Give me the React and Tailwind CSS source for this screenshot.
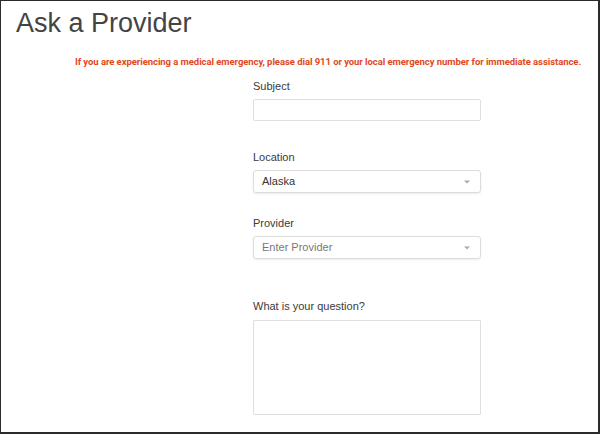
import React, { useState } from "react";

function Caret() {
  return (
    <span className="absolute right-[10px] top-1/2 -translate-y-1/2 w-0 h-0 border-l-[3px] border-r-[3px] border-t-[3px] border-l-transparent border-r-transparent border-t-[#aaa]" />
  );
}

export default function App() {
  const [subject, setSubject] = useState("");
  const [question, setQuestion] = useState("");

  return (
    <div className="w-[600px] h-[434px] bg-white border-l border-t border-r-2 border-b-2 border-[#2b2b2b] overflow-hidden font-['Liberation_Sans',Arial,sans-serif] text-[#333]">
      <h1 className="pl-[15px] pt-[5px] text-[27px] leading-[34px] text-[#444]">Ask a Provider</h1>
      {/* warning */}
      <p className="mt-[15px] pl-[74px] whitespace-nowrap text-[9.5px] tracking-[-0.06px] leading-[14px] font-bold text-[#e2481c] font-['Roboto',Arial,sans-serif]">
        If you are experiencing a medical emergency, please dial 911 or your local emergency number for immediate assistance.
      </p>
      <div className="ml-[252px] w-[228px] flex flex-col">
        <label className="mt-[11px] text-[11px] leading-[13px] text-[#3a3a3a]">Subject</label>
        <input
          value={subject}
          onChange={(e) => setSubject(e.target.value)}
          className="mt-[6px] h-[22px] border border-[#dcdfe3] rounded-[2px] px-2 text-[11px] outline-none"
        />

        <label className="mt-[30px] text-[11px] leading-[13px] text-[#3a3a3a]">Location</label>
        <div className="relative mt-[6px] h-[23px] border border-[#dcdcdc] rounded-[3px] shadow-[0_1px_2px_rgba(0,0,0,0.08)] flex items-center px-2 text-[11px] text-[#333]">
          Alaska
          <Caret />
        </div>

        <label className="mt-[24px] text-[11px] leading-[13px] text-[#3a3a3a]">Provider</label>
        <div className="relative mt-[6px] h-[23px] border border-[#dcdcdc] rounded-[3px] shadow-[0_1px_2px_rgba(0,0,0,0.08)] flex items-center px-2 text-[11px] text-[#777]">
          Enter Provider
          <Caret />
        </div>

        <label className="mt-[41px] text-[11px] leading-[13px] text-[#3a3a3a]">What is your question?</label>
        <textarea
          value={question}
          onChange={(e) => setQuestion(e.target.value)}
          className="mt-[7px] h-[95px] border border-[#dcdfe3] rounded-[1px] resize-none outline-none"
        />
      </div>
    </div>
  );
}
